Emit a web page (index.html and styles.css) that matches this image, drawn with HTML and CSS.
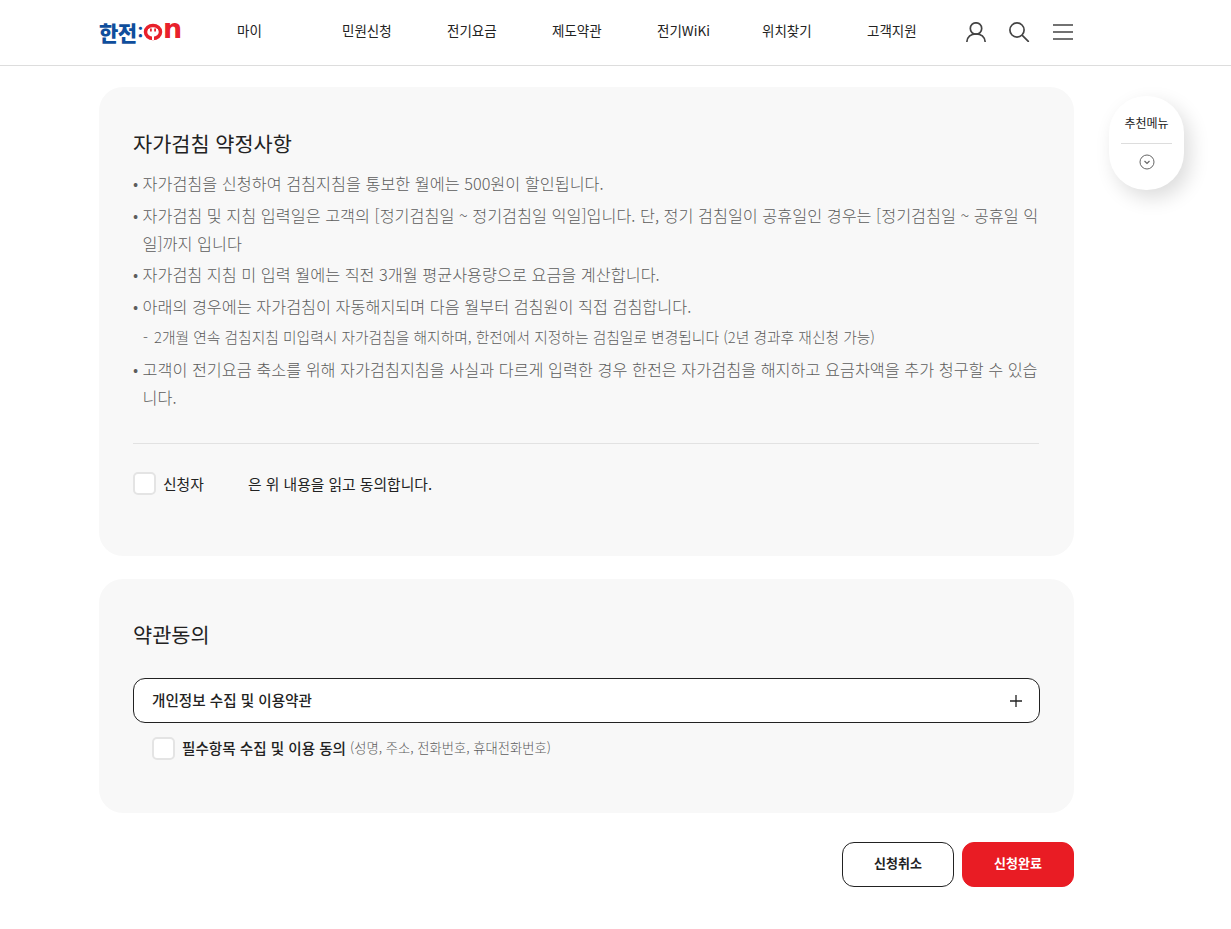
FILE: index.html
```html
<!DOCTYPE html>
<html lang="ko">
  <head>
    <meta charset="UTF-8" />
    <meta name="viewport" content="width=device-width, initial-scale=1.0" />
    <title>자가검침 신청</title>
    <link rel="stylesheet" href="styles.css">
  </head>
  <body>
    <header class="header">
      <div class="header-inner">
        <a class="logo" href="#">
          <span class="logo-kr">한전</span>
          <span class="logo-colon">:</span>
          <svg class="logo-plug" width="20" height="18" viewBox="0 0 20 18">
            <ellipse cx="10" cy="9" rx="7.500" ry="6.500" fill="none" stroke="#e8212b" stroke-width="3.500"/>
            <path d="M5 6h10v2.500a5 4 0 0 1-10 0z" fill="#fff"/>
            <path d="M7 5.500h1.800v3H7zM11.200 5.500H13v3h-1.800z" fill="#e8212b"/>
            <path d="M9 12h2v5H9z" fill="#fff"/>
          </svg>
          <span class="logo-n">n</span>
        </a>
        <nav class="nav">
          <a href="#">마이</a>
          <a href="#">민원신청</a>
          <a href="#">전기요금</a>
          <a href="#">제도약관</a>
          <a href="#">전기WiKi</a>
          <a href="#">위치찾기</a>
          <a href="#">고객지원</a>
        </nav>
        <div class="tools">
          <svg width="20" height="20" viewBox="0 0 20 20" fill="none" stroke="#444" stroke-width="1.700">
            <circle cx="10" cy="6.500" r="5.700"/>
            <path d="M.9 19.500c.6-4.500 4-7.500 9.100-7.500s8.500 3 9.100 7.500" stroke-linecap="round"/>
          </svg>
          <svg width="21" height="20" viewBox="0 0 21 20" fill="none" stroke="#444" stroke-width="1.700">
            <circle cx="8" cy="8" r="7.100"/>
            <path d="M13.300 13.300l6 6" stroke-linecap="round"/>
          </svg>
          <svg width="20" height="16" viewBox="0 0 20 16" fill="none" stroke="#444" stroke-width="1.700">
            <path d="M0 1h20M0 8h20M0 15h20"/>
          </svg>
        </div>
      </div>
    </header>

    <aside class="quick">
      <span class="quick-title">추천메뉴</span>
      <svg width="16" height="16" viewBox="0 0 16 16" fill="none" stroke="#666" stroke-width="1">
        <circle cx="8" cy="8" r="7"/>
        <path d="M5.500 7l2.500 2.500L10.500 7" stroke-width="1.200"/>
      </svg>
    </aside>

    <main class="content">
      <section class="card card-notice">
        <h2>자가검침 약정사항</h2>
        <ul class="notice">
          <li>자가검침을 신청하여 검침지침을 통보한 월에는 500원이 할인됩니다.</li>
          <li>자가검침 및 지침 입력일은 고객의 [정기검침일 ~ 정기검침일 익일]입니다. 단, 정기 검침일이 공휴일인 경우는 [정기검침일 ~ 공휴일 익일]까지 입니다</li>
          <li>자가검침 지침 미 입력 월에는 직전 3개월 평균사용량으로 요금을 계산합니다.</li>
          <li>아래의 경우에는 자가검침이 자동해지되며 다음 월부터 검침원이 직접 검침합니다.</li>
          <li class="sub">2개월 연속 검침지침 미입력시 자가검침을 해지하며, 한전에서 지정하는 검침일로 변경됩니다 (2년 경과후 재신청 가능)</li>
          <li>고객이 전기요금 축소를 위해 자가검침지침을 사실과 다르게 입력한 경우 한전은 자가검침을 해지하고 요금차액을 추가 청구할 수 있습니다.</li>
        </ul>
        <label class="check check-agree">
          <span class="box"></span>
          <span class="agree-name">신청자</span>
          <span>은 위 내용을 읽고 동의합니다.</span>
        </label>
      </section>

      <section class="card card-terms">
        <h2>약관동의</h2>
        <button class="accordion" type="button">
          <span class="accordion-label">개인정보 수집 및 이용약관</span>
          <svg width="14" height="14" viewBox="0 0 14 14" stroke="#222" stroke-width="1.300">
            <path d="M7 1v12M1 7h12"/>
          </svg>
        </button>
        <label class="check check-terms">
          <span class="box"></span>
          <span class="terms-text">필수항목 수집 및 이용 동의</span>
          <span class="terms-note">(성명, 주소, 전화번호, 휴대전화번호)</span>
        </label>
      </section>

      <div class="actions">
        <button class="btn" type="button">신청취소</button>
        <button class="btn btn-red" type="button">신청완료</button>
      </div>
    </main>
  </body>
</html>
```

FILE: styles.css
```css
* {
  margin: 0;
  padding: 0;
  box-sizing: border-box;
}

body {
  font-family: "Noto Sans CJK KR", "Noto Sans", sans-serif;
  color: #222;
  background: #fff;
}

a {
  color: inherit;
  text-decoration: none;
}

.header {
  height: 66px;
  border-bottom: 1px solid #ddd;
}

.header-inner {
  width: 975px;
  height: 65px;
  margin-left: 99px;
  display: flex;
  align-items: center;
}

.logo {
  width: 138px;
  flex: none;
  height: 24px;
  display: flex;
  align-items: center;
  margin-top: -2px;
}

.logo-kr {
  font-size: 21px;
  line-height: 24px;
  font-weight: 900;
  color: #0f4e9c;
  letter-spacing: -0.5px;
}

.logo-colon {
  font-size: 15px;
  line-height: 20px;
  font-weight: 900;
  color: #0f4e9c;
  margin-left: 1px;
}

.logo-plug {
  flex: none;
}

.logo-n {
  font-family: "DejaVu Sans", sans-serif;
  font-size: 27px;
  line-height: 18px;
  font-weight: 700;
  color: #e8212b;
  margin: 0 0 5px 0;
}

.nav {
  display: flex;
  flex: none;
}

.nav a {
  width: 105px;
  font-size: 13.500px;
  line-height: 20px;
  margin-top: -5px;
}

.tools {
  flex: 1;
  display: flex;
  align-items: center;
  justify-content: flex-end;
  gap: 23px;
  margin-top: -2px;
  margin-left: -56px;
  padding-right: 1px;
}

.quick {
  position: absolute;
  left: 1109px;
  top: 96px;
  width: 75px;
  height: 94px;
  border-radius: 37px;
  background: #fff;
  box-shadow: 6px 8px 20px rgba(0, 0, 0, .14);
  display: flex;
  flex-direction: column;
  align-items: center;
}

.quick-title {
  width: 51px;
  height: 48px;
  padding-top: 18px;
  text-align: center;
  font-size: 12px;
  line-height: 18px;
  white-space: nowrap;
  border-bottom: 1px solid #ddd;
  margin-bottom: 10px;
}

.content {
  width: 975px;
  margin: 21px 0 42px 99px;
}

.card {
  background: #f8f8f8;
  border-radius: 24px;
  padding: 0 34px;
}

.card h2 {
  font-size: 20.800px;
  line-height: 30px;
  font-weight: 400;
  color: #222;
}

.card-notice {
  height: 469px;
  padding-top: 41px;
}

.notice {
  list-style: none;
  margin: 11.400px 1px 0 0;
  padding-bottom: 28.600px;
  border-bottom: 1px solid #e2e2e2;
}

.notice li {
  position: relative;
  padding-left: 9.500px;
  font-size: 16.250px;
  line-height: 28px;
  font-weight: 300;
  color: #5c5c5c;
  margin-bottom: 3.500px;
}

.notice li::before {
  content: "•";
  position: absolute;
  left: 0;
}

.notice .sub {
  font-size: 14.780px;
  padding-left: 21px;
}

.notice .sub::before {
  content: "-";
  left: 10px;
}

.check {
  display: flex;
  align-items: center;
}

.box {
  width: 23px;
  height: 23px;
  background: #fff;
  border: 2px solid #e4e4e4;
  border-radius: 5px;
  margin-right: 7px;
}

.check-agree {
  margin-top: 28px;
  font-size: 14.800px;
  line-height: 24px;
  color: #222;
}

.agree-name {
  width: 85px;
}

.card-terms {
  height: 234px;
  margin-top: 23px;
  padding-top: 40px;
}

.accordion {
  width: 100%;
  height: 45px;
  margin-top: 29px;
  padding: 0 16px 0 18px;
  display: flex;
  align-items: center;
  justify-content: space-between;
  background: #fff;
  border: 1px solid #222;
  border-radius: 12px;
  font: inherit;
  font-size: 14.600px;
  font-weight: 500;
  color: #222;
}

.accordion-label {
  margin-top: -3px;
}

.check-terms {
  margin: 14px 0 0 19px;
  font-size: 14.600px;
  line-height: 20px;
  font-weight: 500;
}

.terms-text,
.terms-note {
  margin-top: -1px;
}

.terms-note {
  margin-left: 4px;
  font-size: 13.300px;
  font-weight: 300;
  color: #5c5c5c;
}

.actions {
  margin-top: 29px;
  display: flex;
  justify-content: flex-end;
  gap: 8px;
}

.btn {
  width: 112px;
  height: 45px;
  padding-bottom: 5px;
  background: #fff;
  border: 1px solid #222;
  border-radius: 12px;
  font: inherit;
  font-size: 13px;
  font-weight: 700;
  color: #222;
}

.btn-red {
  background: #e91c24;
  border-color: #e91c24;
  color: #fff;
}
```
